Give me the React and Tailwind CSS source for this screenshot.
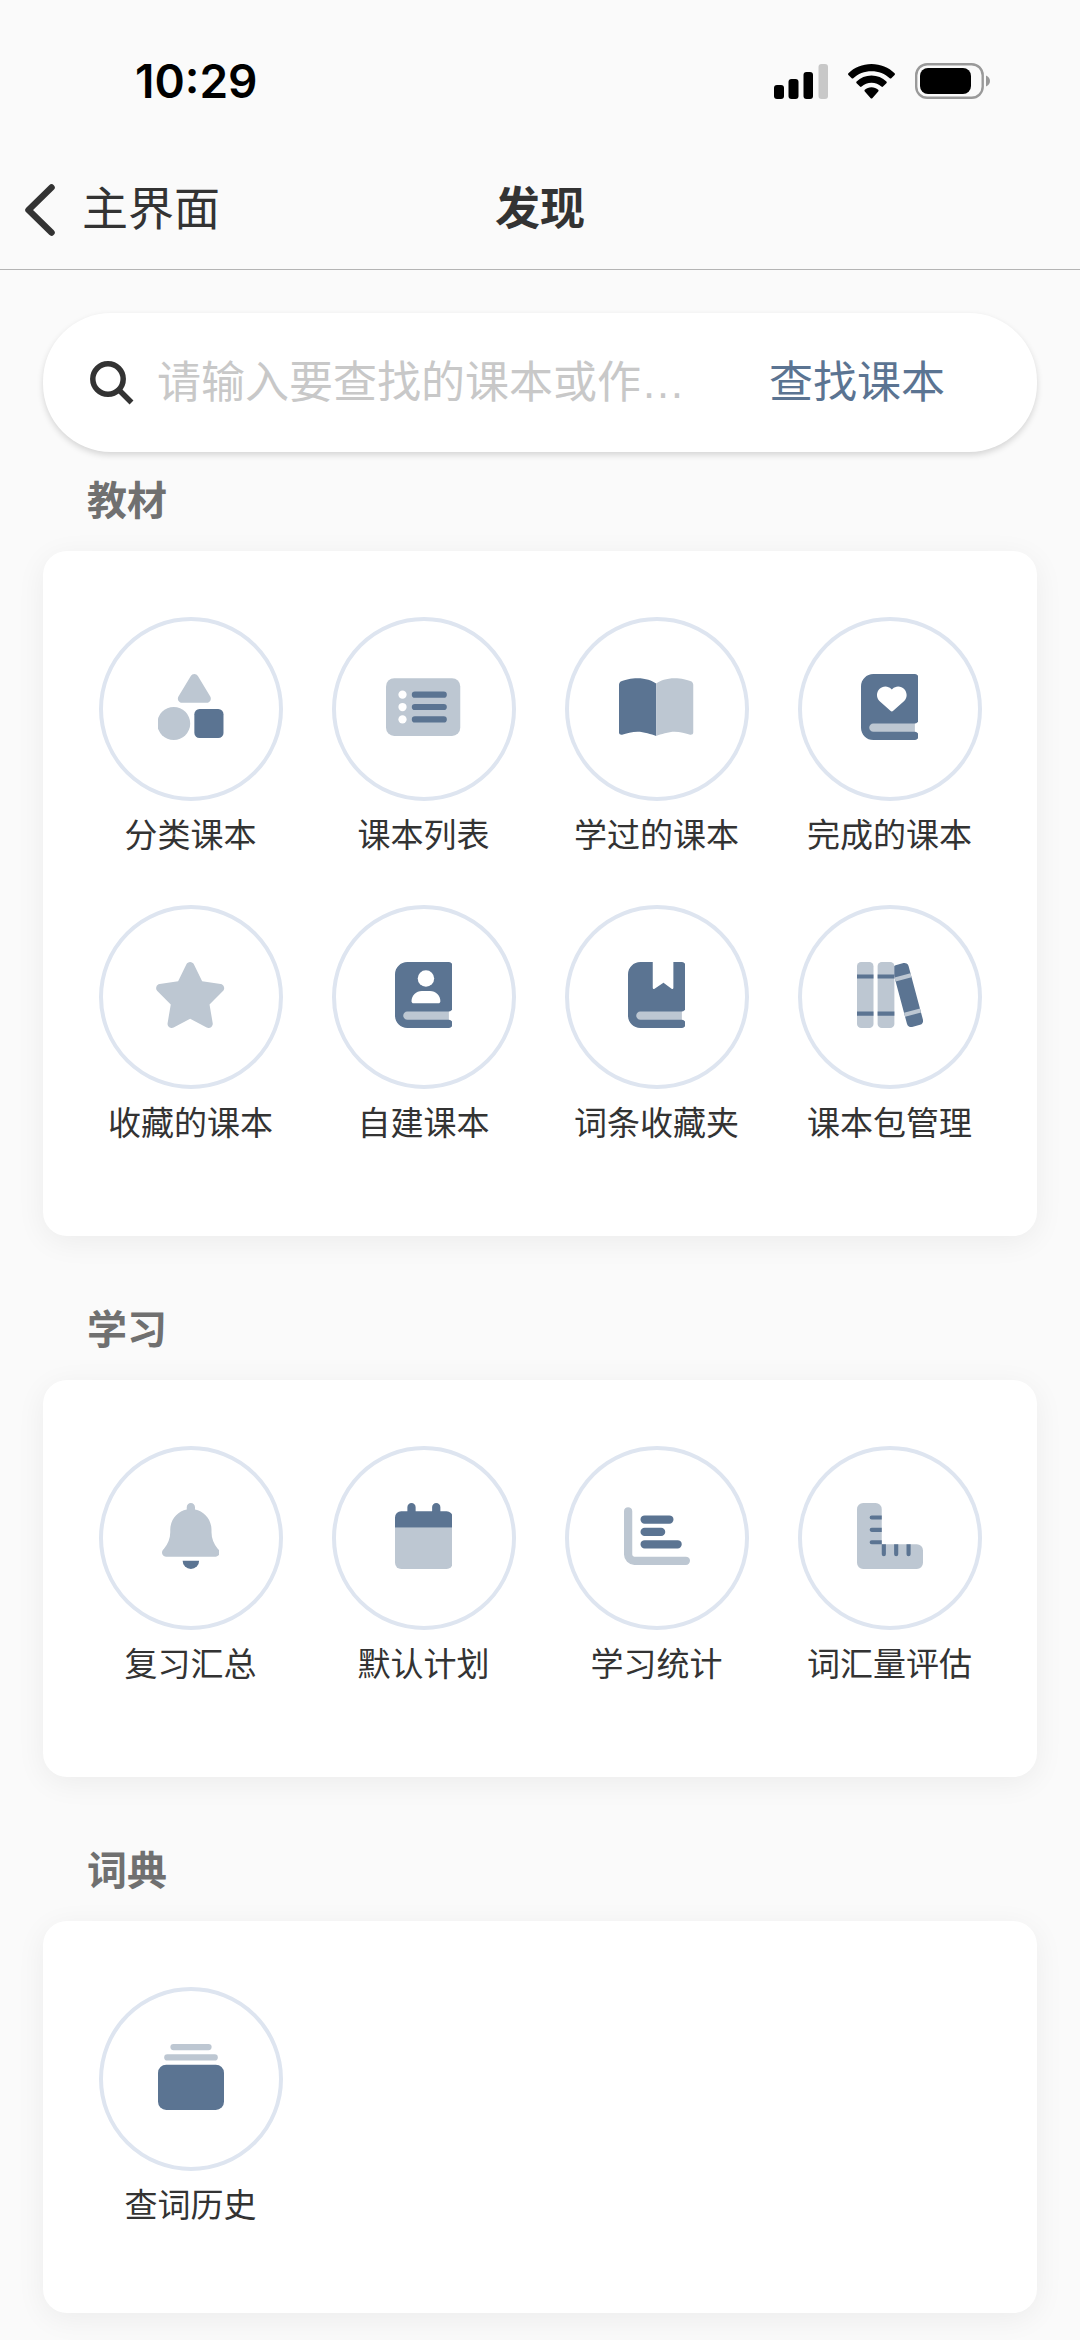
import React, { useState } from "react";

// two tone icons, all of them 512 units high
const dark = "#5b7492";
const light = "#bdc7d2";

const Icon = ({ width = 512, children }) => (
  <svg
    viewBox={`0 0 ${width} 512`}
    className="h-[66px] w-auto"
    aria-hidden="true"
  >
    {children}
  </svg>
);

const Book = ({ children }) => (
  <Icon width={448}>
    <path fill={light} d="M96 380H418V452H96a36 36 0 0 1 0-72z" />
    <path
      fill={dark}
      d="M96 0C43 0 0 43 0 96V416c0 53 43 96 96 96H416a32 32 0 0 0 0-64H96a32 32 0 0 1 0-64H416a32 32 0 0 0 32-32V32a32 32 0 0 0-32-32z"
    />
    {children}
  </Icon>
);

const ShapesIcon = () => (
  <Icon>
    <path
      fill={light}
      d="M309.400 15.500C303.500 5.900 293.200 0 282 0s-21.500 5.900-27.400 15.500l-96 160c-5.900 9.900-6.100 22.200-.4 32.200s16.300 16.200 27.800 16.200H378c11.500 0 22.200-6.200 27.800-16.200s5.500-22.300-.4-32.200l-96-160z"
    />
    <circle cx="122" cy="384" r="128" fill={light} />
    <rect x="282" y="272" width="226" height="225" rx="40" fill={dark} />
  </Icon>
);

const ListIcon = () => (
  <Icon width={576}>
    <rect y="32" width="576" height="448" rx="64" fill={light} />
    <g fill="#fff">
      <circle cx="128" cy="160" r="32" />
      <circle cx="128" cy="256" r="32" />
      <circle cx="128" cy="352" r="32" />
    </g>
    <path
      d="M224 160H448M224 256H448M224 352H448"
      stroke={dark}
      strokeWidth="48"
      strokeLinecap="round"
    />
  </Icon>
);

const OpenBookIcon = () => (
  <Icon width={576}>
    <path
      fill={dark}
      d="M288 74C256 50 208 32 144 32 93 32 46 45 18 56 7 60 0 72 0 84v370c0 12 13 20 24 17 32-11 81-23 120-23 48 0 108 20 144 32z"
    />
    <path
      fill={light}
      d="M288 74c32-24 80-42 144-42 51 0 98 13 126 24 11 4 18 16 18 28v370c0 12-13 20-24 17-32-11-81-23-120-23-48 0-108 20-144 32z"
    />
  </Icon>
);

const HeartBookIcon = () => (
  <Book>
    <path
      fill="#fff"
      d="M124 163c0-37 29-67 66-67 16 0 32 7 43 18l6 6 6-6c11-11 27-18 43-18 37 0 66 30 66 67 0 18-7 34-19 46l-85 77c-6 6-16 6-22 0l-85-77c-12-12-19-28-19-46z"
    />
  </Book>
);

const StarIcon = () => (
  <Icon width={576}>
    <path
      fill={light}
      d="M316.900 18C311.600 7 300.400 0 288.100 0s-23.400 7-28.800 18L195 150.300 51.400 171.500c-12 1.800-22 10.200-25.700 21.700s-.7 24.200 7.900 32.700L137.800 329 113.200 474.700c-2 12 3 24.200 12.900 31.300s23 8 33.800 2.300l128.300-68.500 128.300 68.500c10.800 5.700 23.900 4.900 33.800-2.300s14.900-19.300 12.900-31.300L438.500 329 542.700 225.900c8.600-8.500 11.700-21.200 7.900-32.700s-13.700-19.900-25.700-21.700L381.200 150.300 316.900 18z"
    />
  </Icon>
);

const UserBookIcon = () => (
  <Book>
    <circle cx="240" cy="128" r="64" fill="#fff" />
    <path
      fill="#fff"
      d="M208 224c-44 0-80 36-80 80 0 9 7 16 16 16H336c9 0 16-7 16-16 0-44-36-80-80-80z"
    />
  </Book>
);

const BookmarkIcon = () => (
  <Book>
    <path
      fill="#fff"
      d="M192 -4V200c0 9 8 12 14 8l66-46c2-1 4-1 6 0l60 46c6 4 14 1 14-8V-4z"
    />
  </Book>
);

const BooksIcon = () => (
  <Icon>
    <g transform="rotate(-15 394 256)">
      <rect x="330" y="8" width="128" height="496" rx="32" fill={dark} />
      <path fill={light} d="M330 98h128v32H330zM330 382h128v32H330z" />
    </g>
    <rect width="128" height="512" rx="32" fill={light} />
    <rect x="160" width="130" height="512" rx="32" fill={light} />
    <path
      fill={dark}
      d="M0 96h128v32H0zM160 96h130v32H160zM0 384h128v32H0zM160 384h130v32H160z"
    />
  </Icon>
);

const BellIcon = () => (
  <Icon width={448}>
    <path
      fill={light}
      d="M224 0c-17.700 0-32 14.300-32 32V51.200C119 66 64 130.600 64 208v18.800c0 47-17.300 92.400-48.500 127.600l-7.400 8.300c-8.400 9.400-10.400 22.900-5.300 34.400S19.400 416 32 416H416c12.600 0 24-7.400 29.200-18.900s3.100-25-5.300-34.400l-7.400-8.300C401.300 319.200 384 273.900 384 226.800V208c0-77.400-55-142-128-156.800V32c0-17.700-14.300-32-32-32z"
    />
    <path fill={dark} d="M160 448H288a64 64 0 0 1-128 0z" />
  </Icon>
);

const CalendarIcon = () => (
  <Icon width={448}>
    <path
      fill={dark}
      d="M128 0a32 32 0 0 1 32 32V64H288V32a32 32 0 0 1 64 0V64h48a48 48 0 0 1 48 48v80H0V112A48 48 0 0 1 48 64H96V32a32 32 0 0 1 32-32z"
    />
    <path fill={light} d="M0 192H448V464a48 48 0 0 1-48 48H48a48 48 0 0 1-48-48z" />
  </Icon>
);

const ChartIcon = () => (
  <Icon>
    <path
      fill={light}
      d="M32 32a32 32 0 0 1 32 32V400a16 16 0 0 0 16 16H480a32 32 0 0 1 0 64H80a80 80 0 0 1-80-80V64a32 32 0 0 1 32-32z"
    />
    <path
      d="M160 128H352M160 224H288M160 320H416"
      stroke={dark}
      strokeWidth="64"
      strokeLinecap="round"
    />
  </Icon>
);

const RulerIcon = () => (
  <Icon>
    <path
      fill={light}
      d="M48 0H144a48 48 0 0 1 48 48V320H464a48 48 0 0 1 48 48v96a48 48 0 0 1-48 48H48a48 48 0 0 1-48-48V48A48 48 0 0 1 48 0z"
    />
    <path
      fill={dark}
      d="M192 96v32h-78a16 16 0 0 1 0-32zM192 192v32h-78a16 16 0 0 1 0-32zM192 288v32h-78a16 16 0 0 1 0-32zM192 320h32v78a16 16 0 0 1-32 0zM288 320h32v78a16 16 0 0 1-32 0zM384 320h32v78a16 16 0 0 1-32 0z"
    />
  </Icon>
);

const HistoryIcon = () => (
  <Icon>
    <rect x="96" width="320" height="48" rx="24" fill={light} />
    <rect x="48" y="80" width="416" height="48" rx="24" fill={light} />
    <rect y="160" width="512" height="352" rx="64" fill={dark} />
  </Icon>
);

const sections = [
  {
    title: "教材",
    items: [
      { label: "分类课本", icon: <ShapesIcon /> },
      { label: "课本列表", icon: <ListIcon /> },
      { label: "学过的课本", icon: <OpenBookIcon /> },
      { label: "完成的课本", icon: <HeartBookIcon /> },
      { label: "收藏的课本", icon: <StarIcon /> },
      { label: "自建课本", icon: <UserBookIcon /> },
      { label: "词条收藏夹", icon: <BookmarkIcon /> },
      { label: "课本包管理", icon: <BooksIcon /> },
    ],
  },
  {
    title: "学习",
    items: [
      { label: "复习汇总", icon: <BellIcon /> },
      { label: "默认计划", icon: <CalendarIcon /> },
      { label: "学习统计", icon: <ChartIcon /> },
      { label: "词汇量评估", icon: <RulerIcon /> },
    ],
  },
  {
    title: "词典",
    items: [{ label: "查词历史", icon: <HistoryIcon /> }],
  },
];

const StatusBar = () => (
  <div className="flex items-center justify-between pt-14 pb-11 pl-[135px] pr-[89px] text-black">
    <span className="font-['Inter',sans-serif] text-[46px] leading-[50px] font-semibold">
      10:29
    </span>
    <div className="flex items-center gap-5">
      <svg viewBox="0 0 54 35" className="h-[35px] w-[54px]" aria-hidden="true">
        <rect y="21" width="10" height="14" rx="3" />
        <rect x="14.500" y="15" width="10" height="20" rx="3" />
        <rect x="29.500" y="8" width="9.500" height="27" rx="3" />
        <rect x="44.500" width="9.500" height="35" rx="3" fill="#c8c8c8" />
      </svg>
      <svg viewBox="0 0 47 35" className="h-[35px] w-[47px]" aria-hidden="true">
        <path d="M23.500 0C32.500 0 40.700 3.500 46.600 9.200c.5.500.5 1.200 0 1.700l-3.300 3.300c-.5.500-1.100.5-1.600 0C37 9.800 30.600 7.200 23.500 7.200S10 9.800 5.300 14.200c-.5.500-1.100.5-1.600 0L.4 10.900c-.5-.5-.5-1.200 0-1.700C6.300 3.500 14.500 0 23.500 0z" />
        <path d="M23.500 11.600c5.800 0 11 2.200 14.900 5.900.5.500.5 1.200 0 1.700L35 22.600c-.4.500-1.100.5-1.600 0-2.600-2.400-6.100-3.800-9.900-3.800s-7.300 1.400-9.900 3.800c-.5.500-1.200.5-1.600 0l-3.400-3.400c-.5-.5-.5-1.200 0-1.700 3.900-3.700 9.100-5.900 14.900-5.900z" />
        <path d="M23.500 23.200c2.600 0 4.900.9 6.700 2.500.5.500.5 1.200 0 1.700l-5.900 6.800c-.5.500-1.100.5-1.600 0l-5.900-6.800c-.5-.5-.5-1.200 0-1.700 1.800-1.600 4.100-2.500 6.700-2.500z" />
      </svg>
      <svg viewBox="0 0 76 36" className="h-9 w-[76px]" aria-hidden="true">
        <rect
          x="1.200"
          y="1.200"
          width="66.500"
          height="33.600"
          rx="11"
          fill="none"
          stroke="#999"
          strokeWidth="2.400"
        />
        <rect x="5" y="5" width="51" height="26" rx="8" />
        <path fill="#999" d="M71 12.500c2.500 1 4 3 4 5.500s-1.500 4.500-4 5.500z" />
      </svg>
    </div>
  </div>
);

const Section = ({ title, items }) => (
  <section className="group">
    <h2 className="mb-[22px] px-11 text-[40px] leading-[56px] font-bold text-[#707070]">
      {title}
    </h2>
    <div className="grid grid-cols-4 gap-y-[45px] rounded-3xl bg-white px-[31px] pt-[66px] pb-[88px] shadow-[0_6px_30px_rgba(0,0,0,0.06)] group-last:pb-[83px]">
      {items.map((item) => (
        <button
          key={item.label}
          type="button"
          className="flex flex-col items-center gap-[11px]"
        >
          <span className="flex size-[184px] items-center justify-center rounded-full border-4 border-[#dee5f0] pb-1">
            {item.icon}
          </span>
          <span className="text-[33px] leading-[48px] text-[#333]">
            {item.label}
          </span>
        </button>
      ))}
    </div>
  </section>
);

const App = () => {
  const [keyword, setkeyword] = useState("");

  const handleSubmit = (e) => {
    e.preventDefault();
  };

  return (
    <div
      lang="zh-CN"
      className="min-h-screen bg-[#fafafa] font-['Liberation_Sans','Noto_Sans_CJK_SC',sans-serif] text-[#333]"
    >
      <StatusBar />
      <header className="grid grid-cols-[1fr_auto_1fr] items-center border-b border-[#b4b4b4] py-[26px] pl-6 pr-6">
        <a
          href="#home"
          className="flex items-center gap-[26px] text-[46px] leading-[67px]"
        >
          <svg
            viewBox="0 0 32 52"
            className="h-[52px] w-8"
            fill="none"
            stroke="#333"
            strokeWidth="6.500"
            strokeLinecap="round"
            strokeLinejoin="round"
            aria-hidden="true"
          >
            <path d="M27.500 3.500L4.500 26L27.500 48.500" />
          </svg>
          主界面
        </a>
        <h1 className="text-[45px] leading-[67px] font-bold">发现</h1>
      </header>
      <main className="px-[43px] pt-[43px] pb-[27px]">
        <form
          onSubmit={handleSubmit}
          className="mb-[21px] flex items-center rounded-[68px] bg-white py-9 pl-[47px] pr-[92px] text-[44px] leading-[67px] shadow-[0_3px_6px_rgba(0,0,0,0.15)]"
        >
          <label htmlFor="keyword" aria-label="查找课本">
            <svg
              viewBox="0 0 44 44"
              className="size-11"
              fill="none"
              stroke="#333"
              strokeWidth="5.500"
              aria-hidden="true"
            >
              <circle cx="18" cy="18" r="15.200" />
              <path d="M29 29L41.500 41.500" />
            </svg>
          </label>
          <input
            id="keyword"
            type="text"
            value={keyword}
            onChange={(e) => setkeyword(e.target.value)}
            placeholder="请输入要查找的课本或作…"
            className="mx-[23px] min-w-0 flex-1 outline-none placeholder:text-[#c8c8c8]"
          />
          <button type="submit" className="text-[#5b7492]">
            查找课本
          </button>
        </form>
        <div className="flex flex-col gap-[66px]">
          {sections.map((section) => (
            <Section key={section.title} {...section} />
          ))}
        </div>
      </main>
    </div>
  );
};

export default App;
